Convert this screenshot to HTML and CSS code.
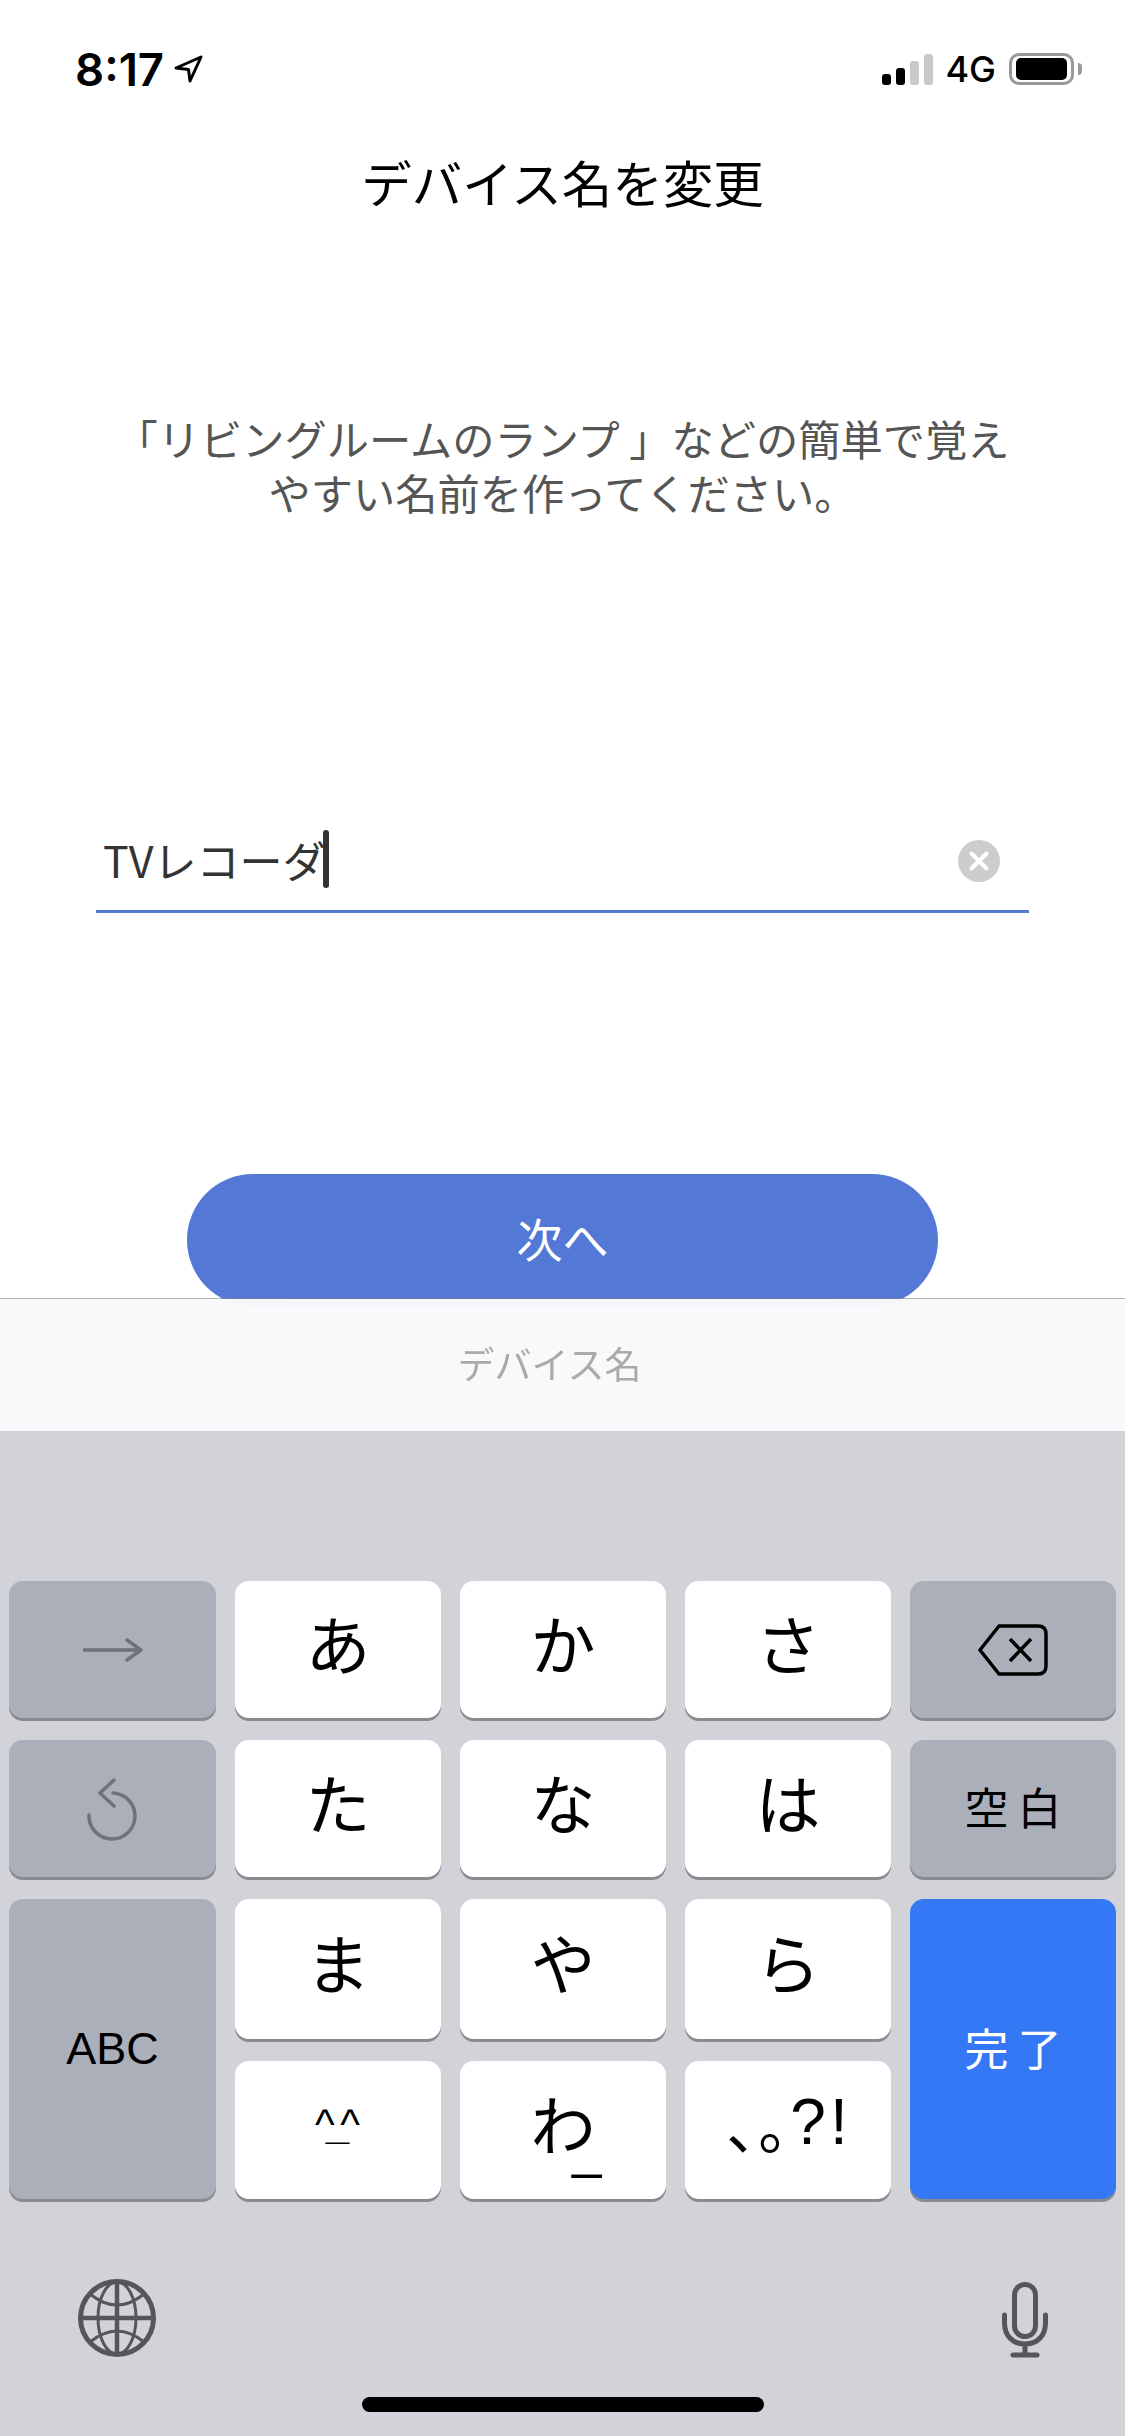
FILE: index.html
```html
<!DOCTYPE html>
<html lang="ja">
<head>
    <meta charset="UTF-8">
    <meta name="viewport" content="width=device-width, initial-scale=1.0">
    <title>デバイス名を変更</title>
    <link rel="stylesheet" href="styles.css">
</head>
<body>
    <div class="screen">
        <!-- ステータスバー -->
        <div class="status-bar">
            <div class="status-left">
                <span class="time">8:17</span>
                <svg class="location" width="30" height="30" viewBox="0 0 30 30"><path d="M2 14 L27 3 L16 27 L14.5 15.5 Z" fill="none" stroke="#000" stroke-width="3" stroke-linejoin="round"/></svg>
            </div>
            <div class="status-right">
                <div class="signal">
                    <span class="bar bar1"></span>
                    <span class="bar bar2"></span>
                    <span class="bar bar3 off"></span>
                    <span class="bar bar4 off"></span>
                </div>
                <span class="network">4G</span>
                <div class="battery"><span class="battery-level"></span></div>
                <span class="battery-nub"></span>
            </div>
        </div>

        <main class="content">
            <h1 class="title">デバイス名を変更</h1>
            <p class="intro">「リビングルームのランプ 」などの簡単で覚え<br>やすい名前を作ってください。</p>
            <div class="name-field">
                <span class="name-value">TVレコーダ</span>
                <span class="caret"></span>
                <svg class="clear" width="42" height="42" viewBox="0 0 42 42"><circle cx="21" cy="21" r="21" fill="#ccc"/><path d="M13.5 13.5 L28.5 28.5 M28.5 13.5 L13.5 28.5" stroke="#fff" stroke-width="4" stroke-linecap="round"/></svg>
            </div>
            <button class="next-button">次へ</button>
        </main>

        <div class="accessory">デバイス名</div>

        <!-- キーボード -->
        <div class="keyboard">
            <div class="keys">
                <div class="key fn icon">
                    <svg width="60" height="24" viewBox="0 0 60 24"><path d="M1 12 H57 M44 2 L58 12 L44 22" fill="none" stroke="#6f727a" stroke-width="3.5" stroke-linecap="round" stroke-linejoin="round"/></svg>
                </div>
                <div class="key">あ</div>
                <div class="key">か</div>
                <div class="key">さ</div>
                <div class="key fn icon">
                    <svg width="70" height="52" viewBox="0 0 70 52"><path d="M21 2 H60 Q68 2 68 10 V42 Q68 50 60 50 H21 L2 26 Z" fill="none" stroke="#000" stroke-width="3.5" stroke-linejoin="round"/><path d="M32 15 L53 37 M53 15 L32 37" stroke="#000" stroke-width="3.5"/></svg>
                </div>

                <div class="key fn icon">
                    <svg width="54" height="64" viewBox="0 0 54 64"><path d="M27 16 A23 23 0 1 1 3 38 M28 3 L14 16 L28 29" fill="none" stroke="#6f727a" stroke-width="3.5" stroke-linecap="round" stroke-linejoin="round"/></svg>
                </div>
                <div class="key">た</div>
                <div class="key">な</div>
                <div class="key">は</div>
                <div class="key fn label">空白</div>

                <div class="key fn tall latin">ABC</div>
                <div class="key">ま</div>
                <div class="key">や</div>
                <div class="key">ら</div>
                <div class="key done tall label">完了</div>

                <div class="key kaomoji">^<b>_</b>^</div>
                <div class="key">わ<span class="wa-mark">_</span></div>
                <div class="key punct"><span class="punct-kana">、。</span><span class="punct-latin">?!</span></div>
            </div>

            <div class="keyboard-bottom">
                <svg width="80" height="80" viewBox="0 0 80 80" fill="none" stroke="#54565c">
                    <circle cx="40" cy="40" r="36.5" stroke-width="5"/>
                    <path d="M40 4 V76 M4 40 H76" stroke-width="4.5"/>
                    <ellipse cx="40" cy="40" rx="19" ry="36" stroke-width="3"/>
                    <path d="M13 16 Q40 38 67 16 M13 64 Q40 42 67 64" stroke-width="3"/>
                </svg>
                <svg class="mic" width="46" height="76" viewBox="0 0 46 76" fill="none" stroke="#54565c" stroke-width="5" stroke-linecap="round">
                    <rect x="12.5" y="2.5" width="21" height="52" rx="10.5"/>
                    <path d="M2.5 33 V41 C2.5 54 11 62 23 62 C35 62 43.5 54 43.5 41 V33 M23 62 V73 M11 73 H35"/>
                </svg>
            </div>
            <div class="home-indicator"></div>
        </div>
    </div>
</body>
</html>
```

FILE: styles.css
```css
body {
    margin: 0;
    background-color: #fff;
    font-family: "Noto Sans CJK JP", sans-serif;
    color: #000;
    text-spacing-trim: space-all;
}

.screen {
    width: 1125px;
    height: 2436px;
    overflow: hidden;
}

/* status bar */
.status-bar {
    height: 138px;
    display: flex;
    justify-content: space-between;
    align-items: center;
    padding: 0 43px 0 75px;
}

.status-left, .status-right {
    display: flex;
    align-items: center;
}

.time {
    font-family: Inter, sans-serif;
    font-weight: 600;
    font-size: 45.5px;
}

.location {
    margin-left: 10px;
}

.signal {
    display: flex;
    align-items: flex-end;
    gap: 5px;
    height: 31px;
}

.bar {
    width: 9px;
    border-radius: 3px;
    background-color: #000;
}

.bar.off {
    background-color: #c9c9c9;
}

.bar1 { height: 11px; }
.bar2 { height: 17px; }
.bar3 { height: 24px; }
.bar4 { height: 31px; }

.network {
    font-family: Inter, sans-serif;
    font-weight: 500;
    font-size: 36px;
    margin-left: 12px;
}

.battery {
    width: 65px;
    height: 32px;
    box-sizing: border-box;
    border: 3px solid #999;
    border-radius: 10px;
    padding: 2px 4px;
    margin-left: 13px;
}

.battery-level {
    display: block;
    height: 100%;
    background-color: #000;
    border-radius: 5px;
}

.battery-nub {
    width: 4px;
    height: 12px;
    margin-left: 4px;
    background-color: #999;
    border-radius: 0 4px 4px 0;
}

/* main */
.content {
    height: 1160px;
    box-sizing: border-box;
    padding-top: 13px;
}

.title {
    margin: 0;
    font-size: 50.5px;
    font-weight: 400;
    line-height: 60px;
    text-align: center;
}

.intro {
    margin: 200px 0 0;
    font-size: 42.25px;
    font-weight: 400;
    line-height: 54px;
    color: #555;
    text-align: center;
}

.name-field {
    margin: 307px 96px 0;
    display: flex;
    align-items: center;
    padding: 0 29px 18px 7px;
    height: 66px;
    border-bottom: 3px solid #5478d6;
}

.name-value {
    font-size: 43px;
    font-weight: 400;
    color: #333;
}

.caret {
    width: 6px;
    height: 58px;
    margin-left: -2px;
    background-color: #333;
    border-radius: 3px;
}

.clear {
    margin: 4px 0 0 auto;
}

.next-button {
    display: block;
    width: 751px;
    height: 132px;
    margin: 261px auto 0;
    padding: 0 0 6px;
    border: none;
    border-radius: 66px;
    background-color: #5478d6;
    color: #fff;
    font-family: inherit;
    font-size: 46px;
    font-weight: 400;
}

/* input accessory over the button */
.accessory {
    position: relative;
    height: 133px;
    display: flex;
    align-items: center;
    justify-content: center;
    padding: 0 26px 4px 0;
    box-sizing: border-box;
    border-top: 1px solid rgba(0, 0, 0, 0.3);
    background-color: rgba(248, 249, 250, 0.95);
    background-clip: padding-box;
    backdrop-filter: blur(30px);
    font-size: 37px;
    font-weight: 400;
    color: #aaa;
}

/* keyboard */
.keyboard {
    height: 1005px;
    box-sizing: border-box;
    padding-top: 150px;
    background-color: #d1d3d9;
}

.keys {
    display: grid;
    grid-template-columns: 207px repeat(4, 206px);
    grid-template-rows: 137px 137px 140px 138px;
    gap: 22px 19px;
    padding-left: 9px;
}

.key {
    display: flex;
    align-items: center;
    justify-content: center;
    padding-bottom: 16px;
    box-sizing: border-box;
    border-radius: 14px;
    background-color: #fff;
    box-shadow: 0 3px 0 #8a8b90;
    font-size: 65px;
}

.key.fn {
    background-color: #abafba;
}

.key.icon {
    padding-bottom: 0;
}

.key.tall {
    grid-row: span 2;
    padding-bottom: 0;
}

.key.label {
    font-size: 44px;
    letter-spacing: 9px;
    text-indent: 9px;
    padding-bottom: 6px;
}

.key.tall.label {
    padding-bottom: 4px;
}

.key.latin {
    font-family: "Liberation Sans", sans-serif;
    font-size: 45px;
}

.key.done {
    background-color: #3478f6;
    color: #fff;
}

.key.kaomoji {
    display: block;
    text-align: center;
    font-family: "Liberation Sans", sans-serif;
    font-size: 42px;
    line-height: 128px;
    letter-spacing: -9px;
    padding: 0 10px 0 0;
}

.wa-mark {
    display: inline-block;
    width: 0;
    margin: 0 25px 0 -25px;
    padding-top: 46px;
    font-size: 58px;
}

.punct-kana {
    font-size: 60px;
    letter-spacing: -28px;
    margin-left: 2px;
}

.punct-latin {
    font-family: "Liberation Sans", sans-serif;
    font-size: 64px;
    letter-spacing: 4px;
}

.keyboard-bottom {
    display: flex;
    justify-content: space-between;
    margin-top: 79px;
    padding: 0 77px;
}

.mic {
    margin-top: 4px;
}

.home-indicator {
    width: 402px;
    height: 15px;
    margin: 39px auto 0;
    border-radius: 8px;
    background-color: #000;
}
```
